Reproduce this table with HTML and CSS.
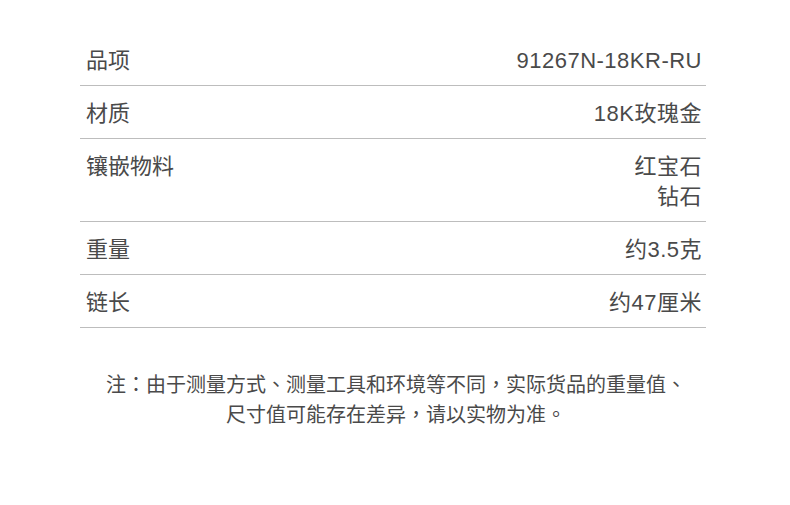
FILE: index.html
```html
<!DOCTYPE html>
<html lang="zh-CN">
<head>
<meta charset="utf-8">
<link rel="stylesheet" href="styles.css">
</head>
<body>
<div class="page">
  <div class="spec">
    <div class="row"><div class="key">品项</div><div class="val">91267N-18KR-RU</div></div>
    <div class="row"><div class="key">材质</div><div class="val">18K玫瑰金</div></div>
    <div class="row"><div class="key">镶嵌物料</div><div class="val">红宝石<br>钻石</div></div>
    <div class="row"><div class="key">重量</div><div class="val">约3.5克</div></div>
    <div class="row"><div class="key">链长</div><div class="val">约47厘米</div></div>
  </div>
</div>
<p class="note" lang="zh-TW">注：由于测量方式、测量工具和环境等不同，实际货品的重量值、<br>尺寸值可能存在差异，请以实物为准。</p>
</body>
</html>
```
FILE: styles.css
```css
html, body {
  margin: 0;
  padding: 0;
  background: #ffffff;
}
body {
  width: 790px;
  height: 505px;
  overflow: hidden;
  font-family: "Liberation Sans", "Noto Sans CJK SC", sans-serif;
  color: #4a4a4a;
}
.page {
  padding-top: 33px;
  padding-left: 80px;
  width: 626px;
}
.spec {
  display: flex;
  flex-direction: column;
}
.row {
  display: flex;
  justify-content: space-between;
  align-items: flex-start;
  padding: 13px 4px 9px 6px;
  border-bottom: 1px solid #bdbdbd;
  font-size: 22px;
  line-height: 30px;
}
.val {
  text-align: right;
  letter-spacing: 0.5px;
}
.note {
  margin: 41px 0 0 0;
  width: 792px;
  text-align: center;
  font-family: "Noto Sans CJK TC", sans-serif;
  font-size: 20px;
  line-height: 30px;
  color: #4a4a4a;
}
```
